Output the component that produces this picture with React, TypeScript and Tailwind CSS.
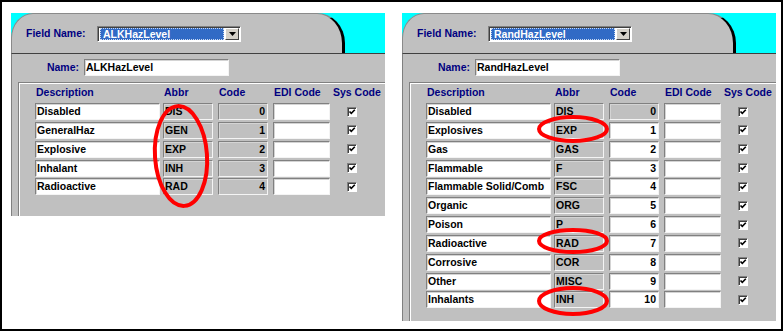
import React from "react";

type Row = { desc: string; abbr: string; code: number; editable?: boolean };

const leftRows: Row[] = [
  { desc: "Disabled", abbr: "DIS", code: 0 },
  { desc: "GeneralHaz", abbr: "GEN", code: 1 },
  { desc: "Explosive", abbr: "EXP", code: 2 },
  { desc: "Inhalant", abbr: "INH", code: 3 },
  { desc: "Radioactive", abbr: "RAD", code: 4 },
];

const rightRows: Row[] = [
  { desc: "Disabled", abbr: "DIS", code: 0 },
  { desc: "Explosives", abbr: "EXP", code: 1, editable: true },
  { desc: "Gas", abbr: "GAS", code: 2, editable: true },
  { desc: "Flammable", abbr: "F", code: 3, editable: true },
  { desc: "Flammable Solid/Comb", abbr: "FSC", code: 4, editable: true },
  { desc: "Organic", abbr: "ORG", code: 5, editable: true },
  { desc: "Poison", abbr: "P", code: 6, editable: true },
  { desc: "Radioactive", abbr: "RAD", code: 7, editable: true },
  { desc: "Corrosive", abbr: "COR", code: 8, editable: true },
  { desc: "Other", abbr: "MISC", code: 9, editable: true },
  { desc: "Inhalants", abbr: "INH", code: 10, editable: true },
];

// sunken win9x text box
const field =
  "h-[17px] border border-t-[#808080] border-l-[#808080] border-r-[#f4f4f4] border-b-[#f4f4f4] shadow-[inset_1px_1px_0_#d4d4d4] px-[1px] leading-[15px] text-black whitespace-nowrap overflow-hidden";

const CheckBox = () => (
  <div className="w-[10px] h-[10px] bg-white border border-t-[#808080] border-l-[#808080] border-r-white border-b-white shadow-[inset_1px_1px_0_#404040] flex items-center justify-center">
    <svg width="8" height="8" viewBox="0 0 8 8">
      <path d="M1.5 3.5 L3.3 5.4 L6.8 1.8" stroke="#000" strokeWidth="1.6" fill="none" />
    </svg>
  </div>
);

const Panel = ({ name, rows, bodyH }: { name: string; rows: Row[]; bodyH: string }) => (
  <div className="w-[374px] flex flex-col">
    <div className="h-[40px] bg-[#00ffff] flex">
      <div className="w-[334px] h-[40px] bg-[#c0c0c0] border-t border-l border-t-[#8a8a8a] border-l-[#8a8a8a] border-r-[3px] border-r-black rounded-tl-[22px_25px] rounded-tr-[28px_30px] flex items-center pl-[14px] pt-[1px]">
        <span className="w-[71px] text-[#000080]">Field Name:</span>
        <div className="w-[144px] h-[16px] bg-white border border-t-[#808080] border-l-[#808080] border-r-white border-b-white shadow-[inset_1px_1px_0_#404040] flex p-[1px] pl-[2px]">
          <div className="flex-1 bg-[#316ac5] border border-dotted border-[#c8d8f0] text-white leading-[11px] pl-[2px] mr-[1px]">
            {name}
          </div>
          <div className="w-[14px] bg-[#d4d0c8] border border-t-white border-l-white border-r-[#404040] border-b-[#404040] flex items-center justify-center">
            <svg width="7" height="4" viewBox="0 0 7 4">
              <path d="M0 0 H7 L3.5 4 Z" fill="#000" />
            </svg>
          </div>
        </div>
      </div>
    </div>
    <div className={`${bodyH} bg-[#c0c0c0] border-t border-t-[#404040] border-l border-l-[#808080] flex flex-col`}>
      <div className="mt-[5px] flex items-center">
        <span className="w-[72px] text-right pr-[5px] text-[#000080]">Name:</span>
        <div className={`${field} w-[145px] bg-white`}>{name}</div>
      </div>
      <div className="mt-[6px] ml-[6px] flex-1 border-t border-l border-[#808080] shadow-[inset_1px_1px_0_#ffffff] pl-[16px]">
        <div className="h-[20px] flex items-center text-[#000080] pb-[1px]">
          <span className="w-[125px] pl-[1px]">Description</span>
          <span className="ml-[3px] w-[50px] pl-[1px]">Abbr</span>
          <span className="ml-[5px] w-[50px] pl-[1px]">Code</span>
          <span className="ml-[5px] w-[57px] pl-[1px]">EDI Code</span>
          <span className="ml-[3px]">Sys Code</span>
        </div>
        <div className="flex flex-col gap-[1.85px]">
          {rows.map((r) => (
            <div key={r.desc} className="flex items-center">
              <div className={`${field} w-[125px] bg-white`}>{r.desc}</div>
              <div className={`${field} ml-[3px] w-[50px] bg-[#c0c0c0]`}>{r.abbr}</div>
              <div className={`${field} ml-[5px] w-[50px] text-right pr-[2px] ${r.editable ? "bg-white" : "bg-[#c0c0c0]"}`}>
                {r.code}
              </div>
              <div className={`${field} ml-[5px] w-[57px] bg-white`}></div>
              <div className="ml-[17px]">
                <CheckBox />
              </div>
            </div>
          ))}
        </div>
      </div>
    </div>
  </div>
);

export default function App() {
  return (
    <div className="relative w-[783px] h-[331px] border-2 border-black bg-white flex items-start gap-[17px] pl-[9px] pt-[11px] font-['Liberation_Sans',Arial,sans-serif] font-bold text-[10.5px]">
      <Panel name="ALKHazLevel" rows={leftRows} bodyH="h-[163px]" />
      <Panel name="RandHazLevel" rows={rightRows} bodyH="h-[268px]" />
      <svg className="absolute left-[-2px] top-[-2px] pointer-events-none" width="783" height="331" viewBox="0 0 783 331">
        <g fill="none" stroke="#ff0000" strokeWidth="4">
          <ellipse cx="181" cy="156" rx="26" ry="50" transform="rotate(-4 181 156)" />
          <ellipse cx="573" cy="129" rx="34" ry="12" />
          <ellipse cx="573" cy="241" rx="34" ry="11" />
          <ellipse cx="573" cy="301" rx="34" ry="13" />
        </g>
      </svg>
    </div>
  );
}
